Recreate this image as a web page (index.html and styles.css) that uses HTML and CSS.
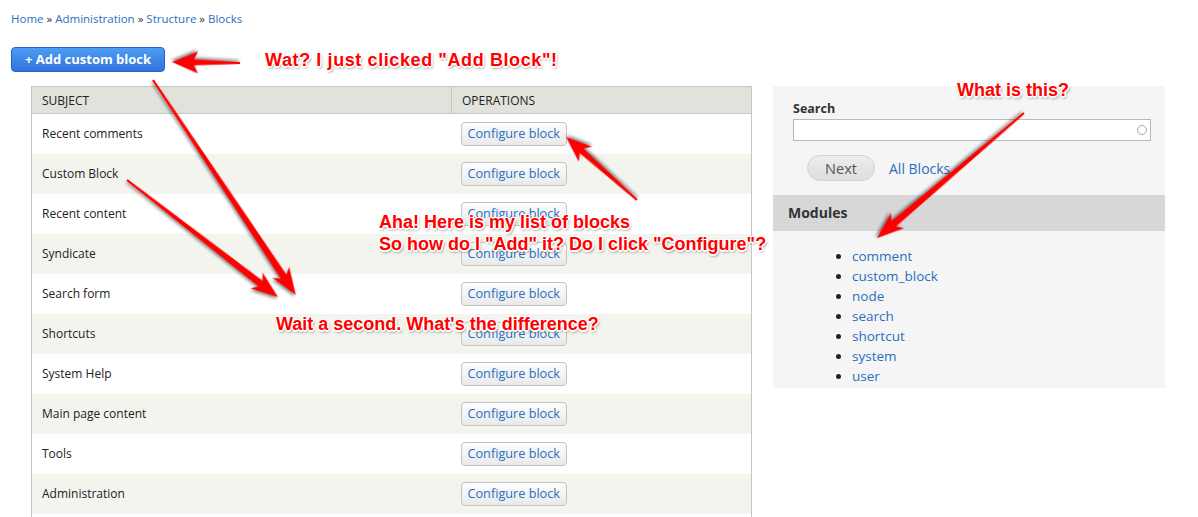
FILE: index.html
```html
<!DOCTYPE html>
<html lang="en">
<head>
    <meta charset="UTF-8">
    <meta name="viewport" content="width=device-width, initial-scale=1.0">
    <title>Blocks</title>
    <link rel="stylesheet" href="styles.css">
</head>
<body>
    <div class="breadcrumb">
        <a href="#">Home</a> » <a href="#">Administration</a> » <a href="#">Structure</a> » <a href="#">Blocks</a>
    </div>
    <div class="actions">
        <a href="#" class="add-btn">+ Add custom block</a>
    </div>

    <div class="layout">
        <div class="main">
            <table class="blocks">
                <thead>
                    <tr>
                        <th class="col-subject">SUBJECT</th>
                        <th>OPERATIONS</th>
                    </tr>
                </thead>
                <tbody>
                    <tr><td>Recent comments</td><td><a href="#" class="conf-btn">Configure block</a></td></tr>
                    <tr><td>Custom Block</td><td><a href="#" class="conf-btn">Configure block</a></td></tr>
                    <tr><td>Recent content</td><td><a href="#" class="conf-btn">Configure block</a></td></tr>
                    <tr><td>Syndicate</td><td><a href="#" class="conf-btn">Configure block</a></td></tr>
                    <tr><td>Search form</td><td><a href="#" class="conf-btn">Configure block</a></td></tr>
                    <tr><td>Shortcuts</td><td><a href="#" class="conf-btn">Configure block</a></td></tr>
                    <tr><td>System Help</td><td><a href="#" class="conf-btn">Configure block</a></td></tr>
                    <tr><td>Main page content</td><td><a href="#" class="conf-btn">Configure block</a></td></tr>
                    <tr><td>Tools</td><td><a href="#" class="conf-btn">Configure block</a></td></tr>
                    <tr><td>Administration</td><td><a href="#" class="conf-btn">Configure block</a></td></tr>
                    <tr><td></td><td></td></tr>
                </tbody>
            </table>
        </div>

        <aside class="sidebar">
            <div class="search">
                <label for="q">Search</label>
                <div class="search-box">
                    <input type="text" id="q">
                    <span class="search-ring"></span>
                </div>
                <div class="pager">
                    <button type="button" class="next-btn">Next</button>
                    <a href="#">All Blocks</a>
                </div>
            </div>
            <h3 class="modules-title">Modules</h3>
            <ul class="modules">
                <li><a href="#">comment</a></li>
                <li><a href="#">custom_block</a></li>
                <li><a href="#">node</a></li>
                <li><a href="#">search</a></li>
                <li><a href="#">shortcut</a></li>
                <li><a href="#">system</a></li>
                <li><a href="#">user</a></li>
            </ul>
        </aside>
    </div>

    <!-- skitch style annotations on top -->
    <svg class="arrows" width="1198" height="517" viewBox="0 0 1198 517">
        <g transform="translate(240 63) rotate(180.8)">
            <polygon points="0,-1 46,-3 42,-11 68,0 42,11 46,3 0,1"/>
        </g>
        <g transform="translate(153 80) rotate(56.4)">
            <polygon points="0,-1 236,-3.5 231,-10 258,0 231,10 236,3.5 0,1"/>
        </g>
        <g transform="translate(127 180) rotate(37.8)">
            <polygon points="0,-1 169,-3.5 164,-10 191,0 164,10 169,3.5 0,1"/>
        </g>
        <g transform="translate(637 200) rotate(-138.4)">
            <polygon points="0,-1 74,-3 69,-10 95,0 69,10 74,3 0,1"/>
        </g>
        <g transform="translate(1024 113) rotate(139.6)">
            <polygon points="0,-1 171,-3.5 166,-10 193,0 166,10 171,3.5 0,1"/>
        </g>
    </svg>
    <div class="note note-wat">Wat? I just clicked "Add Block"!</div>
    <div class="note note-what">What is this?</div>
    <div class="note note-aha">Aha! Here is my list of blocks<br>So how do I "Add" it? Do I click "Configure"?</div>
    <div class="note note-wait">Wait a second. What's the difference?</div>
</body>
</html>
```

FILE: styles.css
```css
html{
    overflow: hidden;
}
body{
    margin: 0;
    padding: 0 0 0 11px;
    font-family: "Open Sans", "DejaVu Sans", sans-serif;
    font-size: 12px;
    color: #222;
    background-color: #fff;
}
a{
    color: #2a6ebd;
    text-decoration: none;
}

.breadcrumb{
    padding-top: 11px;
    font-size: 11.5px;
    line-height: 16px;
    color: #333;
}
.actions{
    margin-top: 20px;
    height: 25px;
}
.add-btn{
    display: inline-block;
    box-sizing: border-box;
    width: 154px;
    height: 25px;
    line-height: 23px;
    text-align: center;
    color: #fff;
    font-weight: bold;
    font-size: 13px;
    border: 1px solid #2a62c4;
    border-radius: 4px;
    background: linear-gradient(#4d9cf3, #2f74dd);
}

.layout{
    display: flex;
    align-items: flex-start;
    gap: 21px;
    margin-top: 14px;
    margin-left: 20px;
}

/* table */
.blocks{
    width: 721px;
    border-collapse: collapse;
    border: 1px solid #c6c6c1;
    border-bottom: none;
}
.blocks th{
    height: 26px;
    padding: 0 10px;
    text-align: left;
    font-weight: normal;
    font-size: 12px;
    background-color: #e1e2dc;
    border-bottom: 1px solid #c6c6c1;
}
.blocks .col-subject{
    width: 399px;
    border-right: 1px solid #c6c6c1;
}
.blocks td{
    height: 40px;
    padding: 0 10px;
    box-sizing: border-box;
}
.blocks tbody tr:nth-child(even){
    background-color: #f3f4ee;
}
.blocks td + td{
    padding-left: 9px;
}
.conf-btn{
    display: inline-block;
    box-sizing: border-box;
    height: 24px;
    line-height: 21px;
    padding: 0 6px;
    font-size: 12.7px;
    border: 1px solid #c2c2c2;
    border-radius: 4px;
    background: linear-gradient(#fdfdfd, #e9e9e9);
}

/* sidebar */
.sidebar{
    width: 392px;
    flex: none;
    background-color: #f5f5f5;
    padding-bottom: 2px;
}
.search{
    padding: 16px 15px 14px 20px;
}
.search label{
    display: block;
    font-weight: bold;
    font-size: 12.5px;
    line-height: 14px;
    color: #333;
}
.search-box{
    position: relative;
    margin-top: 3px;
}
.search-box input{
    display: block;
    box-sizing: border-box;
    width: 358px;
    height: 22px;
    margin: 0;
    border: 1px solid #b9b9b9;
    background: #fff;
}
.search-ring{
    position: absolute;
    right: 3px;
    top: 6px;
    width: 8px;
    height: 8px;
    border: 1.5px solid #a8a8a8;
    border-radius: 50%;
}
.pager{
    display: flex;
    align-items: center;
    gap: 14px;
    margin-top: 14px;
    margin-left: 14px;
    font-size: 14px;
}
.next-btn{
    width: 68px;
    height: 26px;
    padding: 0;
    font-family: inherit;
    font-size: 14.5px;
    color: #555;
    border: 1px solid #d2d2d2;
    border-radius: 13px;
    background: linear-gradient(#ececec, #dedede);
}
.modules-title{
    margin: 0;
    height: 36px;
    line-height: 36px;
    padding-left: 15px;
    font-size: 14px;
    color: #333;
    background-color: #d7d7d7;
}
.modules{
    margin: 15px 0 0 0;
    padding-left: 79px;
    font-size: 13.5px;
    line-height: 20px;
}

/* annotations */
.arrows{
    position: absolute;
    left: 0;
    top: 0;
    pointer-events: none;
}
.arrows polygon{
    fill: #ff0000;
    filter: drop-shadow(1px 2px 1.5px rgba(0, 0, 0, 0.45));
}
.note{
    position: absolute;
    white-space: nowrap;
    font-family: "Liberation Sans", Arial, sans-serif;
    font-weight: bold;
    font-size: 18px;
    line-height: 20px;
    color: #ff0000;
    text-shadow: -1px -1px 0 #fff, 1px -1px 0 #fff, -1px 1px 0 #fff, 1px 1px 0 #fff,
        0 -1.5px 0 #fff, 0 1.5px 0 #fff, -1.5px 0 0 #fff, 1.5px 0 0 #fff,
        1px 2px 3px rgba(0, 0, 0, 0.6);
}
.note-wat{
    left: 265px;
    top: 50px;
    letter-spacing: 0.6px;
}
.note-what{
    left: 957px;
    top: 80px;
}
.note-aha{
    left: 379px;
    top: 211px;
    line-height: 22px;
}
.note-wait{
    left: 276px;
    top: 314px;
}
```
